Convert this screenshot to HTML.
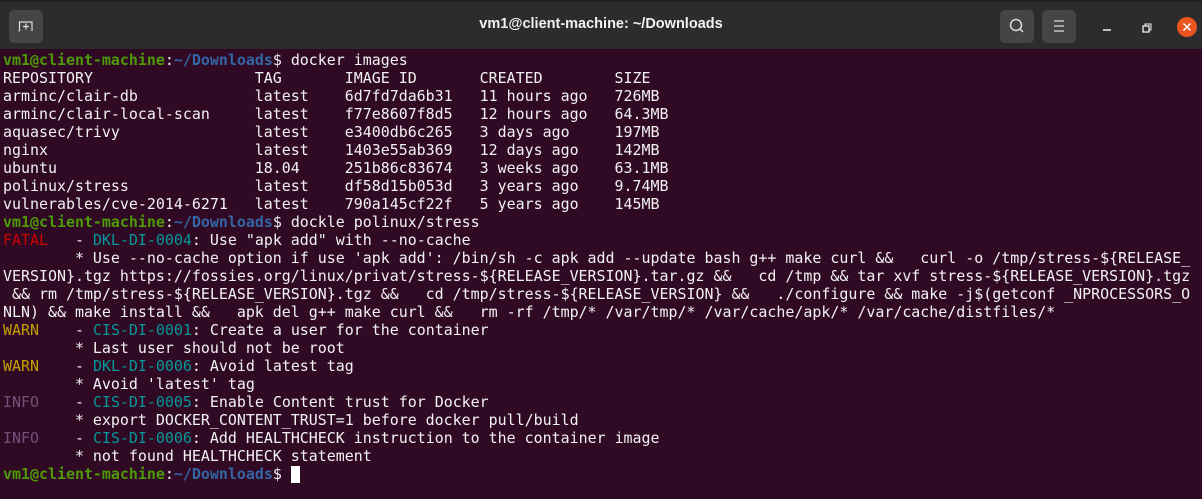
<!DOCTYPE html>
<html><head><meta charset="utf-8"><style>
html,body{margin:0;padding:0;width:1202px;height:499px;overflow:hidden;background:#300a24;}
.tb{position:absolute;left:0;top:0;width:1202px;height:49px;background:#2c2c2c;border-top:2px solid #222;box-sizing:border-box;}
.btn{position:absolute;top:8px;width:34px;height:33px;background:#454545;border-radius:5px;}
.title{position:absolute;left:0;right:0;top:14px;text-align:center;color:#f2f2f2;font:bold 14.5px "Liberation Sans",sans-serif;}
pre{position:absolute;left:3px;top:51px;margin:0;font:14.95px/18px "DejaVu Sans Mono","Liberation Mono",monospace;color:#f2f2f2;}
.g{color:#4e9a06;font-weight:bold}.b{color:#3465a4;font-weight:bold}
.r{color:#cc0000}.t{color:#06989a}.y{color:#c4a000}.p{color:#75507b}
.cur{display:inline-block;width:9px;height:17px;background:#fff;vertical-align:-4px}
</style></head><body>
<div class="tb">
<div class="btn" style="left:9px"><svg width="34" height="33"><path d="M10.5 21 V12 H23 V21 M10.5 21 H9.5 M17 13.5 V19.5 M14 16.5 H20" stroke="#ddd" stroke-width="1.2" fill="none"/></svg></div>
<div class="title">vm1@client-machine: ~/Downloads</div>
<div class="btn" style="left:1000px"><svg width="34" height="33"><circle cx="16" cy="15" r="5.5" stroke="#ddd" stroke-width="1.5" fill="none"/><path d="M20 19 L23 22" stroke="#ddd" stroke-width="1.5"/></svg></div>
<div class="btn" style="left:1042px"><svg width="34" height="33"><path d="M12 11 H22 M12 16 H22 M12 21 H22" stroke="#ddd" stroke-width="1.3"/></svg></div>
<svg style="position:absolute;left:1100px;top:10px" width="100" height="30"><path d="M3 18 H11" stroke="#eee" stroke-width="1.5"/><rect x="43" y="14" width="6" height="6" stroke="#eee" fill="none" stroke-width="1.3"/><path d="M45 14 V12 H51 V18 H49" stroke="#eee" fill="none" stroke-width="1"/><circle cx="87" cy="15" r="10" fill="#e95420"/><path d="M83.5 11.5 L90.5 18.5 M90.5 11.5 L83.5 18.5" stroke="#fff" stroke-width="1.5"/></svg>
</div>
<pre><span class="g">vm1@client-machine</span>:<span class="b">~/Downloads</span>$ docker images
REPOSITORY                  TAG       IMAGE ID       CREATED        SIZE
arminc/clair-db             latest    6d7fd7da6b31   11 hours ago   726MB
arminc/clair-local-scan     latest    f77e8607f8d5   12 hours ago   64.3MB
aquasec/trivy               latest    e3400db6c265   3 days ago     197MB
nginx                       latest    1403e55ab369   12 days ago    142MB
ubuntu                      18.04     251b86c83674   3 weeks ago    63.1MB
polinux/stress              latest    df58d15b053d   3 years ago    9.74MB
vulnerables/cve-2014-6271   latest    790a145cf22f   5 years ago    145MB
<span class="g">vm1@client-machine</span>:<span class="b">~/Downloads</span>$ dockle polinux/stress
<span class="r">FATAL</span>   - <span class="t">DKL-DI-0004</span>: Use "apk add" with --no-cache
        * Use --no-cache option if use 'apk add': /bin/sh -c apk add --update bash g++ make curl &amp;&amp;   curl -o /tmp/stress-${RELEASE_
VERSION}.tgz https://fossies.org/linux/privat/stress-${RELEASE_VERSION}.tar.gz &amp;&amp;   cd /tmp &amp;&amp; tar xvf stress-${RELEASE_VERSION}.tgz
 &amp;&amp; rm /tmp/stress-${RELEASE_VERSION}.tgz &amp;&amp;   cd /tmp/stress-${RELEASE_VERSION} &amp;&amp;   ./configure &amp;&amp; make -j$(getconf _NPROCESSORS_O
NLN) &amp;&amp; make install &amp;&amp;   apk del g++ make curl &amp;&amp;   rm -rf /tmp/* /var/tmp/* /var/cache/apk/* /var/cache/distfiles/*
<span class="y">WARN</span>    - <span class="t">CIS-DI-0001</span>: Create a user for the container
        * Last user should not be root
<span class="y">WARN</span>    - <span class="t">DKL-DI-0006</span>: Avoid latest tag
        * Avoid 'latest' tag
<span class="p">INFO</span>    - <span class="t">CIS-DI-0005</span>: Enable Content trust for Docker
        * export DOCKER_CONTENT_TRUST=1 before docker pull/build
<span class="p">INFO</span>    - <span class="t">CIS-DI-0006</span>: Add HEALTHCHECK instruction to the container image
        * not found HEALTHCHECK statement
<span class="g">vm1@client-machine</span>:<span class="b">~/Downloads</span>$ <span class="cur"></span></pre>
</body></html>
